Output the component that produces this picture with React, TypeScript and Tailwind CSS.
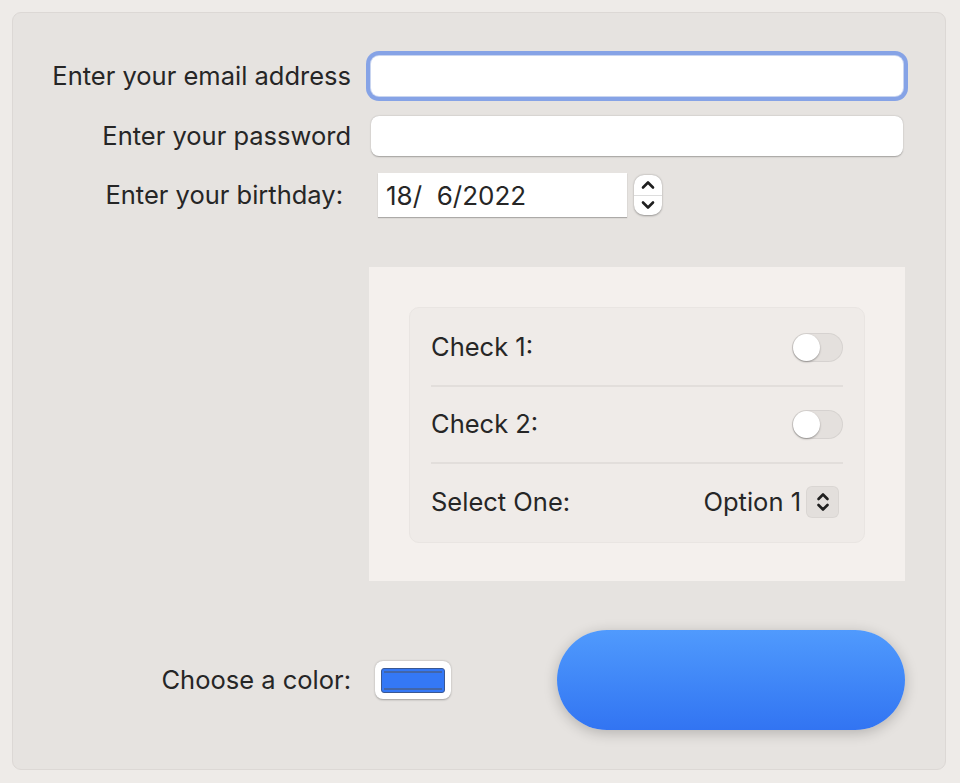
import React from "react";

const font = { fontFamily: 'Inter, "Noto Sans", sans-serif' };

function Toggle() {
  return (
    <div className="relative h-[29px] w-[51px] rounded-full bg-[#e4e0dd] shadow-[inset_0_0_0_1px_rgba(0,0,0,0.06)]">
      <div className="absolute left-[1px] top-[1px] h-[27px] w-[27px] rounded-full bg-white shadow-[0_1px_2px_rgba(0,0,0,0.35)]" />
    </div>
  );
}

export default function App() {
  return (
    <div className="h-[783px] w-[960px] bg-[#eeebe8] pt-[12px] pl-[12px] text-[#262626]" style={font}>
      <div className="flex h-[758px] w-[934px] flex-col rounded-[9px] border border-[#dcd8d5] bg-[#e6e3e0] pt-[43px]">
        {/* Email */}
        <div className="flex h-[40px] items-center">
          <div className="w-[338px] text-right text-[25.5px] leading-none">Enter your email address</div>
          <div className="ml-[20px] h-[40px] w-[532px] rounded-[8px] bg-white shadow-[0_0_0_1px_#c9d5f0,0_0_0_5px_#86a3e6]" />
        </div>
        {/* Password */}
        <div className="mt-[20px] flex h-[40px] items-center">
          <div className="w-[338px] text-right text-[25.5px] leading-none">Enter your password</div>
          <div className="ml-[20px] h-[40px] w-[532px] rounded-[8px] bg-white shadow-[0_0.5px_1.5px_rgba(0,0,0,0.3)]" />
        </div>
        {/* Birthday */}
        <div className="mt-[17px] flex h-[44px] items-center">
          <div className="w-[338px] pr-[8px] text-right text-[25.5px] leading-none">Enter your birthday:</div>
          <div className="ml-[27px] flex h-[44px] w-[249px] items-center bg-white pl-[8px] text-[26px] shadow-[0_1px_1px_rgba(0,0,0,0.25)]">
            18/&nbsp; 6/2022
          </div>
          <div className="ml-[7px] flex h-[40px] w-[28px] flex-col rounded-[10px] bg-white shadow-[0_0.5px_2px_rgba(0,0,0,0.35)]">
            <div className="flex flex-1 items-center justify-center border-b border-[#dddddd]">
              <svg width="16" height="10" viewBox="0 0 16 10" fill="none">
                <path d="M3 7.5L8 2.5L13 7.5" stroke="#1f1f1f" strokeWidth="2.6" strokeLinecap="round" strokeLinejoin="round" />
              </svg>
            </div>
            <div className="flex flex-1 items-center justify-center">
              <svg width="16" height="10" viewBox="0 0 16 10" fill="none">
                <path d="M3 2.5L8 7.5L13 2.5" stroke="#1f1f1f" strokeWidth="2.6" strokeLinecap="round" strokeLinejoin="round" />
              </svg>
            </div>
          </div>
        </div>
        {/* Group box */}
        <div className="ml-[356px] mt-[50px] h-[314px] w-[536px] bg-[#f4f0ed] p-[40px] pb-[38px]">
          <div className="flex h-[236px] flex-col rounded-[10px] border border-[#e9e5e2] bg-[#efebe8] px-[21px] pt-[1px]">
            <div className="flex h-[76px] items-center justify-between text-[25.5px]">
              <span>Check 1:</span>
              <Toggle />
            </div>
            <div className="h-[2px] bg-[#e2dedb]" />
            <div className="flex h-[75px] items-center justify-between text-[25.5px]">
              <span>Check 2:</span>
              <Toggle />
            </div>
            <div className="h-[2px] bg-[#e2dedb]" />
            <div className="flex h-[76px] items-center justify-between text-[25.5px]">
              <span>Select One:</span>
              <div className="flex items-center">
                <span>Option 1</span>
                <div className="ml-[5px] mr-[4px] flex h-[32px] w-[33px] items-center justify-center rounded-[6px] bg-[#e3dfdc] shadow-[inset_0_0_0_1px_rgba(0,0,0,0.04)]">
                  <svg width="16" height="24" viewBox="0 0 16 24" fill="none">
                    <path d="M3.5 9L8 4.5L12.5 9" stroke="#1f1f1f" strokeWidth="2.6" strokeLinecap="round" strokeLinejoin="round" />
                    <path d="M3.5 15L8 19.5L12.5 15" stroke="#1f1f1f" strokeWidth="2.6" strokeLinecap="round" strokeLinejoin="round" />
                  </svg>
                </div>
              </div>
            </div>
          </div>
        </div>
        {/* Color + button */}
        <div className="mt-[49px] flex h-[100px] items-center">
          <div className="w-[338px] text-right text-[25.5px] leading-none">Choose a color:</div>
          <div className="ml-[24px] flex h-[38px] w-[76px] items-center justify-center rounded-[8px] bg-white shadow-[0_0.5px_2px_rgba(0,0,0,0.3)]">
            <div className="h-[25px] w-[64px] rounded-[3px] border border-[#3a5893] bg-[#3478f6] p-[2px]">
              <div className="h-full w-full border-y-2 border-[#4266aa] bg-[#3478f6]" />
            </div>
          </div>
          <div className="ml-[106px] h-[100px] w-[348px] rounded-full bg-gradient-to-b from-[#509afd] to-[#3274f2] shadow-[0_3px_14px_rgba(0,0,0,0.22)]" />
        </div>
      </div>
    </div>
  );
}
